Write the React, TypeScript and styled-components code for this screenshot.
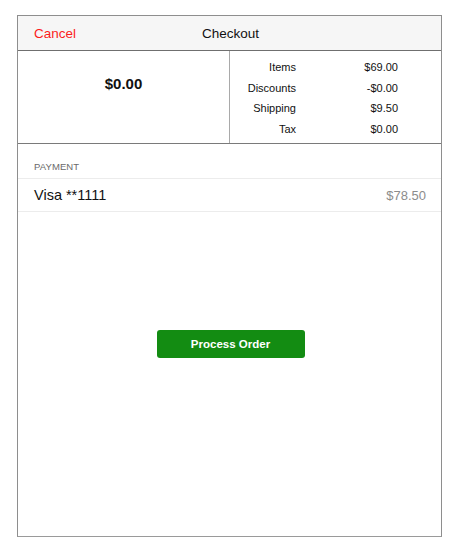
import styled, { createGlobalStyle } from "styled-components"

const GlobalStyle = createGlobalStyle`
  body {
    margin: 0;
    background: #ffffff;
    font-family: "Liberation Sans", Arial, sans-serif;
  }
`

const totals = [
  { label: "Items", value: "$69.00" },
  { label: "Discounts", value: "-$0.00" },
  { label: "Shipping", value: "$9.50" },
  { label: "Tax", value: "$0.00" },
]

const App = () => {
  return (
    <>
      <GlobalStyle />
      <Page>
        <Sheet>
          <Header>
            <CancelButton>Cancel</CancelButton>
            <HeaderTitle>Checkout</HeaderTitle>
          </Header>
          <Summary>
            <TotalCell>$0.00</TotalCell>
            <Breakdown>
              {totals.map((row) => (
                <BreakdownRow key={row.label}>
                  <BreakdownLabel>{row.label}</BreakdownLabel>
                  <BreakdownValue>{row.value}</BreakdownValue>
                </BreakdownRow>
              ))}
            </Breakdown>
          </Summary>
          <SectionLabel>PAYMENT</SectionLabel>
          <PaymentRow>
            <PaymentName>Visa **1111</PaymentName>
            <PaymentAmount>$78.50</PaymentAmount>
          </PaymentRow>
          <ButtonArea>
            <ProcessButton>Process Order</ProcessButton>
          </ButtonArea>
        </Sheet>
      </Page>
    </>
  )
}

const Page = styled.div`
  padding: 15px 0 0 17px;
`

const Sheet = styled.div`
  width: 425px;
  height: 522px;
  box-sizing: border-box;
  border: 1px solid #8e8e8e;
  border-bottom-color: #9a9a9a;
  display: flex;
  flex-direction: column;
`

const Header = styled.div`
  position: relative;
  height: 34px;
  background: #f6f6f6;
  border-bottom: 1px solid #6f6f6f;
  display: flex;
  align-items: center;
  justify-content: center;
`

const CancelButton = styled.span`
  position: absolute;
  left: 16px;
  top: 10px;
  font-size: 13.5px;
  color: #fc1c1c;
`

const HeaderTitle = styled.span`
  font-size: 13.5px;
  color: #111111;
  margin-left: 2px;
`

const Summary = styled.div`
  height: 92px;
  border-bottom: 1px solid #7a7a7a;
  display: flex;
`

const TotalCell = styled.div`
  width: 212px;
  border-right: 1px solid #a9a9a9;
  display: flex;
  justify-content: center;
  padding-top: 24px;
  box-sizing: border-box;
  font-size: 15px;
  font-weight: bold;
  color: #111111;
`

const Breakdown = styled.div`
  flex: 1;
  padding-top: 10px;
  display: flex;
  flex-direction: column;
  gap: 7.7px;
`

const BreakdownRow = styled.div`
  display: flex;
  font-size: 11px;
  line-height: 13px;
  color: #111111;
`

const BreakdownLabel = styled.span`
  width: 66px;
  text-align: right;
`

const BreakdownValue = styled.span`
  width: 102px;
  text-align: right;
`

const SectionLabel = styled.div`
  padding: 17px 0 0 16px;
  height: 17px;
  font-size: 9.5px;
  color: #6a6a6a;
  letter-spacing: 0.1px;
  border-bottom: 1px solid #ececec;
`

const PaymentRow = styled.div`
  height: 32px;
  display: flex;
  align-items: center;
  justify-content: space-between;
  padding: 0 15px 0 16px;
  border-bottom: 1px solid #ececec;
`

const PaymentName = styled.span`
  font-size: 14.5px;
  color: #111111;
`

const PaymentAmount = styled.span`
  font-size: 13px;
  color: #8c8c8c;
`

const ButtonArea = styled.div`
  display: flex;
  justify-content: center;
  padding-top: 118px;
  padding-left: 2px;
`

const ProcessButton = styled.button`
  width: 148px;
  height: 28px;
  border: none;
  border-radius: 3px;
  background: #138c12;
  color: #ffffff;
  font-family: "Liberation Sans", Arial, sans-serif;
  font-size: 11.5px;
  font-weight: bold;
`

export default App
